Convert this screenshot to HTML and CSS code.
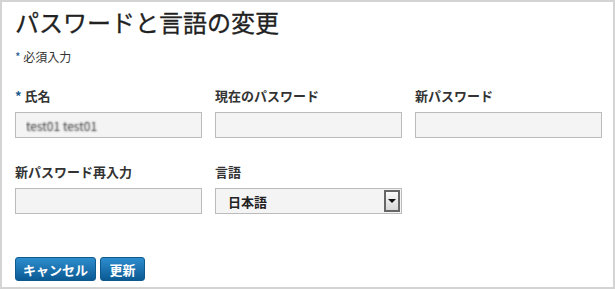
FILE: index.html
```html
<!DOCTYPE html>
<html lang="ja">
<head>
    <meta charset="UTF-8">
    <meta name="viewport" content="width=device-width, initial-scale=1.0">
    <title>パスワードと言語の変更</title>
    <link rel="stylesheet" href="styles.css">
</head>
<body>

    <div class="page">
        <h1>パスワードと言語の変更</h1>
        <p class="required-note"><span class="star">*</span> 必須入力</p>

        <!-- Fields -->
        <div class="form-grid">
            <div class="field">
                <label for="fullName"><span class="star">*</span> 氏名</label>
                <input type="text" id="fullName" class="blurred" value="test01 test01" readonly>
            </div>
            <div class="field">
                <label for="currentPassword">現在のパスワード</label>
                <input type="password" id="currentPassword">
            </div>
            <div class="field">
                <label for="newPassword">新パスワード</label>
                <input type="password" id="newPassword">
            </div>
            <div class="field">
                <label for="confirmPassword">新パスワード再入力</label>
                <input type="password" id="confirmPassword">
            </div>
            <div class="field">
                <label for="language">言語</label>
                <div class="select-box">
                    <select id="language">
                        <option value="ja">日本語</option>
                        <option value="en">English</option>
                    </select>
                    <span class="select-arrow"></span>
                </div>
            </div>
        </div>

        <!-- Buttons -->
        <div class="actions">
            <button id="cancelBtn">キャンセル</button>
            <button id="updateBtn" class="update-button">更新</button>
        </div>
    </div>

</body>
</html>
```

FILE: styles.css
```css
body {
    font-family: "Noto Sans CJK JP", "Noto Sans", sans-serif;
    background-color: #fff;
    color: #333;
    margin: 0;
    padding: 0;
}
.page {
    box-sizing: border-box;
    width: 615px;
    height: 289px;
    border: 2px solid #d4d4d4;
    padding: 5px 13px 0;
}
h1 {
    font-size: 24px;
    font-weight: normal;
    line-height: 30px;
    margin: 0 0 12px;
    color: #222;
    -webkit-text-stroke: 0.3px #222;
}
.required-note {
    font-size: 12px;
    line-height: 16px;
    margin: 0 0 23px;
}
.star {
    color: #1d5a8e;
}
.form-grid {
    display: grid;
    grid-template-columns: repeat(3, 187px);
    column-gap: 13px;
    row-gap: 26px;
}
.field label {
    display: block;
    font-size: 13px;
    font-weight: bold;
    line-height: 16px;
    margin-bottom: 8px;
}
.field input {
    display: block;
    width: 187px;
    height: 26px;
    box-sizing: border-box;
    border: 1px solid #bbb;
    background-color: #f4f4f4;
    padding: 0 10px;
    font-family: inherit;
    font-size: 12px;
    margin: 0;
    outline: none;
}
.field input.blurred {
    color: transparent;
    text-shadow: 0 0 2px rgba(40, 40, 40, 0.9);
}
.select-box {
    display: flex;
    align-items: center;
    width: 187px;
    height: 26px;
    box-sizing: border-box;
    border: 1px solid #bbb;
    background-color: #f4f4f4;
    padding-right: 1px;
}
.select-box select {
    flex: 1;
    height: 100%;
    border: none;
    background: transparent;
    appearance: none;
    -webkit-appearance: none;
    font-family: inherit;
    font-size: 13px;
    font-weight: bold;
    color: #222;
    padding: 0 0 0 12px;
    margin: 0;
    outline: none;
}
.select-arrow {
    width: 16px;
    height: 22px;
    box-sizing: border-box;
    border: 2px solid #666;
    background: linear-gradient(#fafafa, #d8d8d8);
    display: flex;
    align-items: center;
    justify-content: center;
}
.select-arrow::after {
    content: "";
    border-left: 4px solid transparent;
    border-right: 4px solid transparent;
    border-top: 4px solid #111;
}
.actions {
    display: flex;
    gap: 4px;
    margin-top: 43px;
}
button {
    height: 24px;
    padding: 0 7px;
    background: linear-gradient(#2e8dcd, #0a5a94);
    color: white;
    border: 1px solid #0d5a8f;
    border-radius: 3px;
    font-family: inherit;
    font-size: 13px;
    font-weight: bold;
    cursor: pointer;
}
button:hover {
    background: linear-gradient(#3a9ad9, #0d66a6);
}
.update-button {
    min-width: 45px;
}
```
